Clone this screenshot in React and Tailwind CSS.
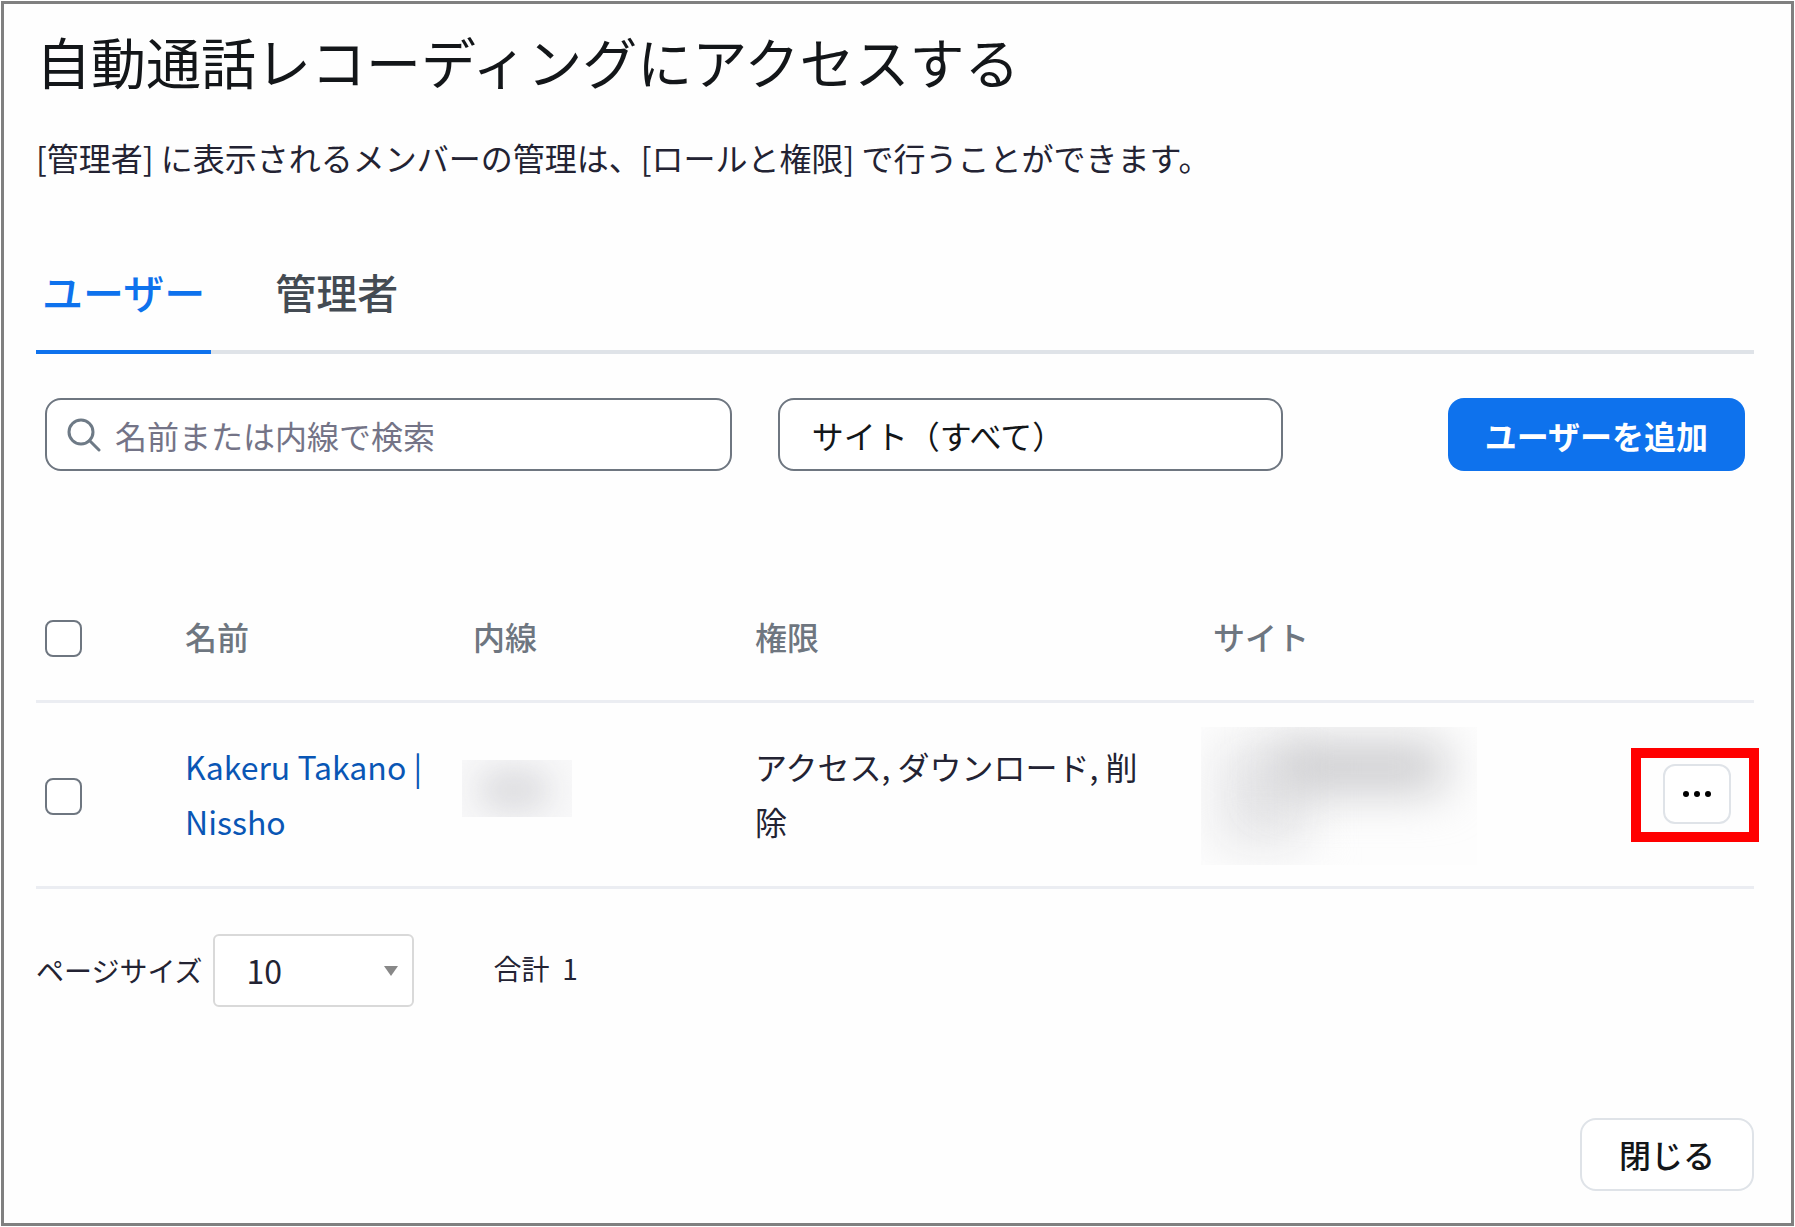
import { useState } from "react";

const users = [
  {
    id: 1,
    name: "Kakeru Takano | Nissho",
    permissions: "アクセス, ダウンロード, 削除",
  },
];

const tabs = [
  { id: "users", label: "ユーザー" },
  { id: "admins", label: "管理者" },
];

const checkboxClass =
  "block size-[37px] appearance-none rounded-lg border-2 border-[#6e7680] bg-white checked:bg-[#0e72ed]";

function SearchIcon() {
  return (
    <svg viewBox="0 0 34 34" className="size-[34px] shrink-0" fill="none" stroke="#6e7a86" strokeWidth="3">
      <circle cx="14" cy="14" r="12" />
      <path d="M22.5 22.5 L32 32" strokeLinecap="round" />
    </svg>
  );
}

function MaskedExtension() {
  return (
    <div className="relative h-[57px] w-[110px] overflow-hidden bg-[#f8f8f9]">
      <div className="absolute top-2 left-4 h-11 w-18 rounded-full bg-[#dddde0] blur-lg" />
    </div>
  );
}

function MaskedSite() {
  return (
    <div className="relative h-[138px] w-[276px] overflow-hidden bg-[#fdfdfd]">
      <div className="absolute top-4 left-4 h-[104px] w-[92px] bg-[#e6e6e8] blur-xl" />
      <div className="absolute top-4 left-19 h-12 w-[168px] bg-[#c9c9cc] blur-xl" />
    </div>
  );
}

export default function App() {
  const [tab, setTab] = useState("users");
  const [query, setQuery] = useState("");
  const [selected, setSelected] = useState([]);

  const toggle = (id) =>
    setSelected((prev) => (prev.includes(id) ? prev.filter((x) => x !== id) : [...prev, id]));

  const toggleAll = (e) => setSelected(e.target.checked ? users.map((u) => u.id) : []);

  return (
    <div
      lang="ja"
      className="flex min-h-screen bg-white p-px font-['Noto_Sans_CJK_JP',sans-serif] text-[32px] text-[#232333]"
    >
      <main className="flex-1 border-[3px] border-[#808080] bg-[#fefefe] pt-4 pr-[37px] pb-8 pl-8">
        <h1 className="text-[55px] leading-[80px] text-[#131619]">
          自動通話レコーディングにアクセスする
        </h1>
        <p className="mt-8 leading-[50px]">
          [管理者] に表示されるメンバーの管理は、[ロールと権限] で行うことができます。
        </p>

        {/* Tabs */}
        <div role="tablist" className="mt-[79px] flex gap-[58px] border-b-4 border-[#dfe3e8]">
          {tabs.map((t) => (
            <button
              key={t.id}
              role="tab"
              aria-selected={tab === t.id}
              onClick={() => setTab(t.id)}
              className={
                tab === t.id
                  ? "-mb-1 border-b-4 border-[#0e72ed] px-1.5 pb-[29px] text-[41px] leading-[60px] font-medium text-[#0e72ed]"
                  : "-mb-1 border-b-4 border-transparent px-1.5 pb-[29px] text-[41px] leading-[60px] font-medium text-[#444b53]"
              }
            >
              {t.label}
            </button>
          ))}
        </div>

        {/* Filters */}
        <div className="mt-11 flex items-center pr-[9px] pl-[9px]">
          <label className="flex h-[73px] w-[40.4%] items-center gap-3.5 rounded-2xl border-2 border-[#6e7680] bg-white px-5">
            <SearchIcon />
            <input
              aria-label="名前または内線で検索"
              placeholder="名前または内線で検索"
              value={query}
              onChange={(e) => setQuery(e.target.value)}
              className="min-w-0 flex-1 outline-none placeholder:text-[#747487]"
            />
          </label>
          <select
            aria-label="サイト"
            className="ml-[46px] h-[73px] w-[29.7%] appearance-none rounded-2xl border-2 border-[#6e7680] bg-white px-8 text-[#131619]"
          >
            <option>サイト（すべて）</option>
          </select>
          <button className="ml-auto h-[73px] rounded-2xl bg-[#0e72ed] px-[37px] font-bold text-white">
            ユーザーを追加
          </button>
        </div>

        {/* Users */}
        <table className="mt-[102px] w-full table-fixed text-left">
          <thead>
            <tr className="h-32 border-b-3 border-[#ebedf2] text-[#6e7680]">
              <th className="w-[149px] pt-1 pl-[9px]">
                <input
                  type="checkbox"
                  aria-label="すべて選択"
                  checked={selected.length === users.length}
                  onChange={toggleAll}
                  className={checkboxClass}
                />
              </th>
              <th className="w-[277px] font-medium">名前</th>
              <th className="w-[293px] pl-[11px] font-medium">内線</th>
              <th className="w-[446px] font-medium">権限</th>
              <th className="pl-3 font-medium">サイト</th>
              <th className="w-[91px]" aria-label="操作" />
            </tr>
          </thead>
          <tbody>
            {users.map((u) => (
              <tr key={u.id} className="h-[186px] border-b-3 border-[#ebedf2]">
                <td className="pt-1 pl-[9px]">
                  <input
                    type="checkbox"
                    aria-label={u.name}
                    checked={selected.includes(u.id)}
                    onChange={() => toggle(u.id)}
                    className={checkboxClass}
                  />
                </td>
                <td className="pr-6 leading-[55px]">
                  <a href="#user" className="text-[#0956b5]">
                    {u.name}
                  </a>
                </td>
                <td className="pb-3">
                  <MaskedExtension />
                </td>
                <td className="pr-14 leading-[55px]">{u.permissions}</td>
                <td className="pt-1">
                  <MaskedSite />
                </td>
                <td>
                  <div className="relative h-[60px] w-[68px]">
                    <button
                      aria-label="その他"
                      className="flex size-full items-center justify-center rounded-xl border-2 border-[#dfe3e8] bg-white"
                    >
                      <svg viewBox="0 0 28 6" className="h-1.5 w-7" fill="#000">
                        <circle cx="3" cy="3" r="3" />
                        <circle cx="14" cy="3" r="3" />
                        <circle cx="25" cy="3" r="3" />
                      </svg>
                    </button>
                    <div className="pointer-events-none absolute -top-4 -right-7 -bottom-[18px] -left-8 border-10 border-[#ff0000]" />
                  </div>
                </td>
              </tr>
            ))}
          </tbody>
        </table>

        {/* Pagination */}
        <div className="mt-[45px] flex items-center text-[28px]">
          <label htmlFor="page-size">ページサイズ</label>
          <div className="relative ml-2.5">
            <select
              id="page-size"
              className="block h-[73px] w-[201px] appearance-none rounded-md border-2 border-[#d9d9d9] bg-white px-8 text-[32px]"
            >
              <option>10</option>
              <option>20</option>
              <option>50</option>
            </select>
            <svg
              viewBox="0 0 14 10"
              className="pointer-events-none absolute top-8 right-4 h-2.5 w-3.5"
              fill="#888"
            >
              <path d="M0 0h14L7 10z" />
            </svg>
          </div>
          <span className="ml-20 pb-1">合計&nbsp; 1</span>
        </div>

        <div className="mt-[111px] flex justify-end">
          <button className="h-[73px] rounded-2xl border-2 border-[#dfe3e8] bg-white px-[37px] font-medium text-[#131619]">
            閉じる
          </button>
        </div>
      </main>
    </div>
  );
}
